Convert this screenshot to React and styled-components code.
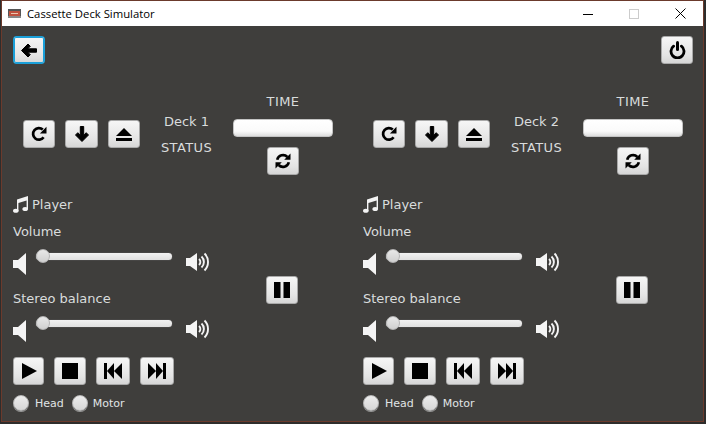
import React from "react";
import styled, { createGlobalStyle } from "styled-components";

const Global = createGlobalStyle`
  html, body { margin: 0; padding: 0; background: #2e2d2c; }
  #root { width: 706px; height: 424px; overflow: hidden; }
`;

const Frame = styled.div`
  width: 703px;
  height: 422px;
  margin-left: 1px;
  box-sizing: border-box;
  border: 1px solid #6b3a2c;
  background: #3f3e3c;
  display: flex;
  flex-direction: column;
  overflow: hidden;
  font-family: "DejaVu Sans", Verdana, sans-serif;
  color: #d9dcdc;
`;

const TitleBar = styled.div`
  height: 25px;
  flex: none;
  background: #fff;
  display: flex;
  align-items: center;
  padding-left: 6px;
  font-family: "Open Sans", "Noto Sans", sans-serif;
  font-size: 11.3px;
  color: #000;
`;

const TitleText = styled.span`
  margin-left: 6px;
  flex: 1;
`;

const WinButton = styled.div`
  width: 46px;
  height: 25px;
  display: flex;
  align-items: center;
  justify-content: center;
`;

const TopBar = styled.div`
  display: flex;
  justify-content: space-between;
  padding: 10px 10px 0 11px;
  height: 27px;
`;

const Btn = styled.div`
  box-sizing: border-box;
  width: ${(p) => p.$w || 32}px;
  height: ${(p) => p.$h || 28}px;
  flex: none;
  display: flex;
  align-items: center;
  justify-content: center;
  border-radius: 3px;
  background: linear-gradient(#f6f6f6, #e4e4e4 70%, #d6d6d6);
  border: 1px solid ${(p) => (p.$focus ? "#1a9fd8" : "#a9a9a9")};
  box-shadow: ${(p) => (p.$focus ? "0 0 0 1px #1a9fd8 inset" : "none")};
`;

const Decks = styled.div`
  display: flex;
  margin-top: 31px;
`;

const Deck = styled.div`
  width: 350px;
  flex: none;
  padding-left: 11px;
  box-sizing: border-box;
  display: flex;
  flex-direction: column;
`;

const Header = styled.div`
  display: flex;
  height: 84px;
`;

const Transport = styled.div`
  display: flex;
  gap: 10px;
  margin: 26px 0 0 10px;
`;

const Status = styled.div`
  width: 93px;
  display: flex;
  flex-direction: column;
  align-items: center;
  gap: 11px;
  padding-top: 20px;
`;

const Label = styled.div`
  font-size: 13px;
  line-height: 15px;
  white-space: nowrap;
  letter-spacing: ${(p) => (p.$caps ? "0.4px" : "0")};
  margin-top: ${(p) => p.$top || 0}px;
`;

const TimeCol = styled.div`
  width: 100px;
  display: flex;
  flex-direction: column;
  align-items: center;
`;

const TimeBar = styled.div`
  width: 100px;
  height: 18px;
  box-sizing: border-box;
  margin-top: 10px;
  margin-bottom: 10px;
  border-radius: 4px;
  background: linear-gradient(#ffffff, #fafafa 70%, #dedede);
  border: 1px solid #c4c4c4;
`;

const Player = styled.div`
  display: flex;
  margin-top: 18px;
`;

const PlayerMain = styled.div`
  width: 253px;
  display: flex;
  flex-direction: column;
`;

const PlayerTitle = styled.div`
  display: flex;
  align-items: center;
  gap: 4px;
  height: 17px;
`;

const SliderRow = styled.div`
  display: flex;
  height: 27px;
  margin-top: 9px;
  margin-bottom: 16px;
`;

const LowSlot = styled.div`
  margin-top: 5px;
`;

const Track = styled.div`
  position: relative;
  width: 136px;
  height: 7px;
  margin: 5px 0 0 10px;
  border-radius: 4px;
  background: linear-gradient(#f2f2f2, #e0e0e0);
  box-shadow: 0 0 1px #999;
`;

const Thumb = styled.div`
  position: absolute;
  left: 0;
  top: -4px;
  width: 14px;
  height: 14px;
  border-radius: 50%;
  background: linear-gradient(#e8e8e8, #d0d0d0);
  border: 1px solid #b4b4b4;
  box-sizing: border-box;
`;

const HighSlot = styled.div`
  margin: 4px 0 0 14px;
`;

const Controls = styled.div`
  display: flex;
  gap: 10px;
  margin-top: -1px;
`;

const Radios = styled.div`
  display: flex;
  align-items: center;
  margin-top: 9px;
  height: 18px;
`;

const Radio = styled.div`
  width: 16px;
  height: 16px;
  box-sizing: border-box;
  border-radius: 50%;
  background: linear-gradient(#ececec, #d6d6d6);
  border: 1px solid #b8b8b8;
  box-shadow: 0 1px 0 #999;
  margin-right: ${(p) => p.$gap}px;
`;

const RadioLabel = styled.span`
  font-size: 11px;
  margin-right: 8px;
  color: #e0e4e6;
`;

const Side = styled.div`
  margin-top: 80px;
`;

const Svg = ({ w = 20, h = 20, vb = "0 0 20 20", children, fill = "#000" }) => (
  <svg width={w} height={h} viewBox={vb} fill={fill}>{children}</svg>
);

const ArrowLeft = () => (
  <Svg w={16} h={15} vb="0 0 16 15">
    <path d="M.5 7.500 7 1l2.300 2.300-2.500 2.500H15.500v3.400H6.800l2.500 2.500L7 14z" stroke="#000" strokeWidth="1" strokeLinejoin="round" />
  </Svg>
);
const ArrowDown = () => (
  <Svg w={14} h={16} vb="0 0 14 16">
    <path d="M7 15.500.5 9l2.300-2.300 2.500 2.500V.5h3.400v8.700l2.500-2.500L13.500 9z" stroke="#000" strokeWidth="1" strokeLinejoin="round" />
  </Svg>
);
const Reload = () => (
  <Svg w={16} h={16} vb="0 0 16 16" fill="none">
    <path d="M12.600 11.300A5.800 5.800 0 1 1 11.800 3.600" stroke="#000" strokeWidth="2.700" />
    <path d="M15.500 .8v6.600H8.900z" fill="#000" />
  </Svg>
);
const Eject = () => (
  <Svg w={16} h={13} vb="0 0 16 13">
    <path d="M8 0 16 8H0zM0 10h16v3H0z" />
  </Svg>
);
const Refresh = () => (
  <Svg w={16} h={16} vb="0 0 16 16" fill="none">
    <path d="M2.200 6.800A6 6 0 0 1 12.400 4" stroke="#000" strokeWidth="2.600" />
    <path d="M15.500 .5v6.300H9.200z" fill="#000" />
    <path d="M13.800 9.200A6 6 0 0 1 3.600 12" stroke="#000" strokeWidth="2.600" />
    <path d="M.5 15.500V9.200h6.300z" fill="#000" />
  </Svg>
);
const Power = () => (
  <Svg w={17} h={18} vb="0 0 17 18" fill="none">
    <path d="M4.600 5.200a6.500 6.500 0 1 0 7.800 0" stroke="#000" strokeWidth="2.800" strokeLinecap="round" />
    <path d="M8.500 1.500v7" stroke="#000" strokeWidth="3" strokeLinecap="round" />
  </Svg>
);
const Note = () => (
  <Svg w={15} h={17} vb="0 0 15 17" fill="#f4f4f4">
    <path d="M4 3.500 15 0v13h-1.400V4.400L5.400 7v8H4z" />
    <ellipse cx="2.800" cy="14.800" rx="2.800" ry="2" />
    <ellipse cx="12.200" cy="13" rx="2.800" ry="2" />
  </Svg>
);
const SpeakerLow = () => (
  <Svg w={13} h={22} vb="0 0 13 22" fill="#f4f4f4">
    <path d="M0 7h5l8-7v22l-8-7H0z" />
  </Svg>
);
const SpeakerHigh = () => (
  <Svg w={24} h={20} vb="0 0 24 20" fill="none">
    <path d="M0 6h4L11 1v18l-7-5H0z" fill="#f4f4f4" />
    <path d="M13 7a4 4 0 0 1 0 6M15.500 4.500a7.500 7.500 0 0 1 0 11M18.500 1.500a12 12 0 0 1 0 17" stroke="#f4f4f4" strokeWidth="1.900" />
  </Svg>
);
const Play = () => <Svg w={16} h={16} vb="0 0 16 16"><path d="M1 0 16 8 1 16z" /></Svg>;
const Stop = () => <Svg w={16} h={16} vb="0 0 16 16"><path d="M0 0h16v16H0z" /></Svg>;
const Prev = () => <Svg w={18} h={16} vb="0 0 18 16"><path d="M0 0h3v16H0zM3 8l7-8v16zM10 8l8-8v16z" /></Svg>;
const Next = () => <Svg w={18} h={16} vb="0 0 18 16"><path d="M18 0h-3v16h3zM15 8 8 0v16zM8 8 0 0v16z" /></Svg>;
const Pause = () => <Svg w={16} h={16} vb="0 0 16 16"><path d="M0 0h6.500v16H0zM9.500 0H16v16H9.500z" /></Svg>;

const SliderLine = () => (
  <SliderRow>
    <LowSlot><SpeakerLow /></LowSlot>
    <Track><Thumb /></Track>
    <HighSlot><SpeakerHigh /></HighSlot>
  </SliderRow>
);

const DeckPanel = ({ n }) => (
  <Deck>
    <Header>
      <Transport>
        <Btn><Reload /></Btn>
        <Btn $w={33}><ArrowDown /></Btn>
        <Btn><Eject /></Btn>
      </Transport>
      <Status>
        <Label>Deck {n}</Label>
        <Label $caps>STATUS</Label>
      </Status>
      <TimeCol>
        <Label $caps>TIME</Label>
        <TimeBar />
        <Btn><Refresh /></Btn>
      </TimeCol>
    </Header>
    <Player>
      <PlayerMain>
        <PlayerTitle><Note /><Label>Player</Label></PlayerTitle>
        <Label $top={11}>Volume</Label>
        <SliderLine />
        <Label>Stereo balance</Label>
        <SliderLine />
        <Controls>
          <Btn $w={31}><Play /></Btn>
          <Btn><Stop /></Btn>
          <Btn $w={34}><Prev /></Btn>
          <Btn $w={34}><Next /></Btn>
        </Controls>
        <Radios>
          <Radio $gap={6} /><RadioLabel>Head</RadioLabel>
          <Radio $gap={5} /><RadioLabel>Motor</RadioLabel>
        </Radios>
      </PlayerMain>
      <Side><Btn><Pause /></Btn></Side>
    </Player>
  </Deck>
);

export default function App() {
  return (
    <>
      <Global />
      <Frame>
        <TitleBar>
          <svg width="13" height="9" viewBox="0 0 13 9">
            <rect width="13" height="9" fill="#555" />
            <rect x="1" y="2" width="11" height="5" fill="#c0523f" />
            <rect x="3" y="4" width="7" height="1" fill="#e9c7b0" />
            <rect x="0" y="7" width="13" height="2" fill="#888" />
          </svg>
          <TitleText>Cassette Deck Simulator</TitleText>
          <WinButton>
            <svg width="10" height="10" viewBox="0 0 10 10"><path d="M0 5.500h10" stroke="#000" /></svg>
          </WinButton>
          <WinButton>
            <svg width="10" height="10" viewBox="0 0 10 10"><rect x=".5" y=".5" width="9" height="9" fill="none" stroke="#ccc" /></svg>
          </WinButton>
          <WinButton>
            <svg width="11" height="11" viewBox="0 0 11 11"><path d="M.5.500l10 10M10.500.500l-10 10" stroke="#000" /></svg>
          </WinButton>
        </TitleBar>
        <TopBar>
          <Btn $focus><ArrowLeft /></Btn>
          <Btn><Power /></Btn>
        </TopBar>
        <Decks>
          <DeckPanel n={1} />
          <DeckPanel n={2} />
        </Decks>
      </Frame>
    </>
  );
}
